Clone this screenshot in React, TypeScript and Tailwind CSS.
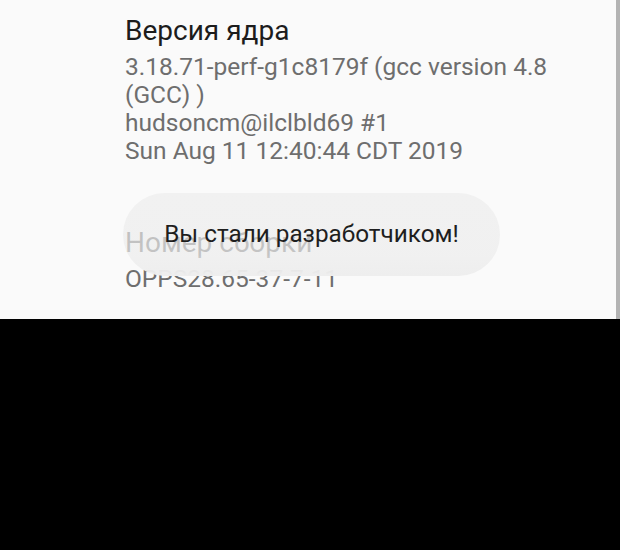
import React from 'react';

const Row = ({ title, lines, className = '' }: { title: string; lines: string[]; className?: string }) => (
    <div className={className}>
        <div className="text-[28px] leading-[36px] text-[#1c1c1c]">{title}</div>
        <div className="mt-[4px] text-[24.5px] leading-[28px] text-[#6e6e6e]">
            {lines.map((l) => (
                <div key={l}>{l}</div>
            ))}
        </div>
    </div>
);

export default function App() {
    return (
        <div className="w-[620px] h-[550px] bg-black flex flex-col" style={{ fontFamily: 'Roboto, "Noto Sans", sans-serif' }}>
            <div className="relative h-[319px] flex bg-[#fafafa] overflow-hidden">
                <div className="flex-1 pl-[125px] pt-[13px]">
                    <Row
                        title="Версия ядра"
                        lines={['3.18.71-perf-g1c8179f (gcc version 4.8', '(GCC) )', 'hudsoncm@ilclbld69 #1', 'Sun Aug 11 12:40:44 CDT 2019']}
                    />
                    <Row className="mt-[60px]" title="Номер сборки" lines={['OPPS28.65-37-7-11']} />
                </div>
                <div className="w-[4px] bg-[#b3b3b3]" />

                {/* toast */}
                <div className="absolute left-[123px] top-[193px] w-[377px] h-[83px] rounded-full bg-linear-to-b from-[#eeeeee]/75 via-[#eeeeee]/80 via-75% to-[#eeeeee] flex items-center justify-center">
                    <span className="text-[24.3px] text-[#1e1e1e]">Вы стали разработчиком!</span>
                </div>
            </div>
        </div>
    );
}
